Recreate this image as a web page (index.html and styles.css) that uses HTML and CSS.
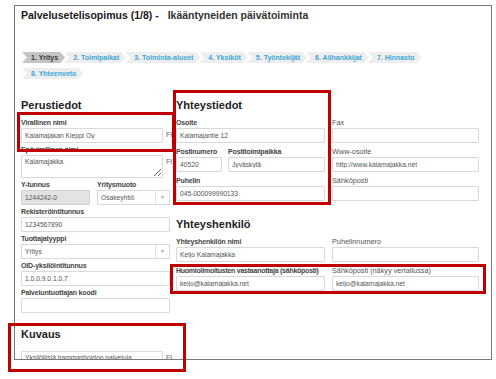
FILE: index.html
```html
<!DOCTYPE html>
<html lang="fi">
<head>
<meta charset="UTF-8" />
<title>Palvelusetelisopimus</title>
<link rel="stylesheet" href="styles.css">
</head>
<body>

<div class="frame">
  <h1 class="page-title">Palvelusetelisopimus (1/8) - <span class="sub">Ikääntyneiden päivätoiminta</span></h1>

  <ul class="steps">
    <li class="current">1. Yritys</li>
    <li>2. Toimipaikat</li>
    <li>3. Toiminta-alueet</li>
    <li>4. Yksiköt</li>
    <li>5. Työntekijät</li>
    <li>6. Alihankkijat</li>
    <li>7. Hinnasto</li>
    <li>8. Yhteenveto</li>
  </ul>

  <div class="cols">
    <!-- Perustiedot -->
    <section class="col-left">
      <h2>Perustiedot</h2>
      <div class="field">
        <label>Virallinen nimi</label>
        <div class="lang-row"><input class="w-lang" type="text" value="Kalamajakan Kieppi Oy"><span class="fi">FI</span></div>
      </div>
      <div class="field">
        <label>Epävirallinen nimi</label>
        <div class="lang-row"><textarea class="w-lang area">Kalamajakka</textarea><span class="fi">FI</span></div>
      </div>
      <div class="field pair">
        <div class="ytunnus">
          <label>Y-tunnus</label>
          <input class="readonly" type="text" value="1244242-0" readonly>
        </div>
        <div class="muoto">
          <label>Yritysmuoto</label>
          <div class="select"><span>Osakeyhtiö</span></div>
        </div>
      </div>
      <div class="field">
        <label>Rekisteröintitunnus</label>
        <input type="text" value="1234567890">
      </div>
      <div class="field">
        <label>Tuottajatyyppi</label>
        <div class="select"><span>Yritys</span></div>
      </div>
      <div class="field">
        <label>OID-yksilöintitunnus</label>
        <input type="text" value="1.0.0.9.0.1.0.7">
      </div>
      <div class="field">
        <label>Palveluntuottajan koodi</label>
        <input type="text" value="">
      </div>

      <h2 class="kuvaus">Kuvaus</h2>
      <div class="lang-row"><textarea class="w-lang area-big">Yksilöllisiä hammashoidon palveluja</textarea><span class="fi">FI</span></div>
    </section>

    <!-- Yhteystiedot -->
    <section class="col-contact">
      <h2>Yhteystiedot</h2>
      <div class="grid2">
        <div>
          <label>Osoite</label>
          <input type="text" value="Kalamajantie 12">
        </div>
        <div>
          <label class="light">Fax</label>
          <input type="text" value="">
        </div>
        <div class="post">
          <div class="postnum">
            <label>Postinumero</label>
            <input type="text" value="40520">
          </div>
          <div class="postplace">
            <label>Postitoimipaikka</label>
            <input type="text" value="Jyväskylä">
          </div>
        </div>
        <div>
          <label class="light">Www-osoite</label>
          <input type="text" value="http://www.kalamajakka.net">
        </div>
        <div>
          <label>Puhelin</label>
          <input type="text" value="045-000099990133">
        </div>
        <div>
          <label class="light">Sähköposti</label>
          <input type="text" value="">
        </div>
      </div>

      <h2 class="contact-head">Yhteyshenkilö</h2>
      <div class="grid2">
        <div>
          <label>Yhteyshenkilön nimi</label>
          <input type="text" value="Keijo Kalamajakka">
        </div>
        <div>
          <label class="light">Puhelinnumero</label>
          <input type="text" value="">
        </div>
        <div>
          <label class="long">Huomioilmoitusten vastaanottaja (sähköposti)</label>
          <input type="text" value="keijo@kalamajakka.net">
        </div>
        <div>
          <label class="light">Sähköposti (näkyy vertailussa)</label>
          <input type="text" value="keijo@kalamajakka.net">
        </div>
      </div>
    </section>
  </div>
</div>

<!-- korostukset -->
<div class="mark mark-nimi"></div>
<div class="mark mark-yhteys"></div>
<div class="mark mark-email"></div>
<div class="mark mark-kuvaus"></div>

</body>
</html>
```

FILE: styles.css
```css
body {
  margin: 0;
  font-family: "Liberation Sans", Arial, sans-serif;
  background: #fff;
  color: #333;
}
.frame {
  margin: 5px 0 0 14px;
  width: 478px;
  height: 355px;
  box-sizing: border-box;
  border: 1px solid #7a7a7a;
  padding: 2px 0 0 6px;
  overflow: hidden;
}
.page-title {
  margin: 0;
  font-size: 10.5px;
  line-height: 14px;
  font-weight: bold;
  color: #1a1a1a;
}
.page-title .sub {
  margin-left: 6px;
  color: #333;
}
/* Vaiheet */
.steps {
  list-style: none;
  margin: 30px 0 0 1px;
  padding: 0;
  display: flex;
  flex-wrap: wrap;
  row-gap: 5px;
  max-width: 420px;
}
.steps li {
  height: 11px;
  line-height: 11px;
  font-size: 7px;
  font-weight: bold;
  color: #3fa7d6;
  background: #eeeeee;
  padding: 0 7px 0 9px;
  margin-right: -1px;
  clip-path: polygon(0 0, calc(100% - 5px) 0, 100% 50%, calc(100% - 5px) 100%, 0 100%, 5px 50%);
}
.steps li.current {
  background: #c4c4c4;
  color: #3a3a3a;
}
/* Sarakkeet */
.cols {
  display: flex;
  gap: 6px;
  margin-top: 19px;
}
.col-left {
  width: 149px;
  flex: none;
}
.col-contact {
  width: 303px;
  flex: none;
}
h2 {
  margin: 0 0 6px;
  font-size: 11px;
  line-height: 14px;
  font-weight: bold;
  color: #222;
}
h2.kuvaus {
  margin: 14px 0 10px;
}
h2.contact-head {
  margin-top: 16px;
}
label {
  display: block;
  font-size: 7px;
  line-height: 9px;
  font-weight: bold;
  letter-spacing: -0.15px;
  color: #444;
  margin-bottom: 1px;
  white-space: nowrap;
}
label.light {
  font-weight: normal;
  font-size: 7.3px;
  letter-spacing: 0;
  color: #555;
}
label.long {
  letter-spacing: -0.25px;
}
input, textarea {
  display: block;
  width: 100%;
  height: 15px;
  box-sizing: border-box;
  border: 1px solid #d9d9d9;
  border-radius: 1px;
  padding: 0 3px;
  margin: 0;
  font-family: "Liberation Sans", Arial, sans-serif;
  font-size: 6.7px;
  color: #555;
  background: #fff;
  outline: none;
}
textarea {
  padding: 2px 3px;
  resize: vertical;
  line-height: 8px;
}
textarea.area {
  height: 23px;
}
textarea.area-big {
  height: 30px;
}
input.readonly {
  background: #e3e3e3;
  border-color: #d0d0d0;
}
.field {
  margin-bottom: 2px;
}
.lang-row {
  display: flex;
  align-items: flex-start;
  gap: 3px;
}
.lang-row .w-lang {
  width: 142px;
  flex: none;
}
.fi {
  font-size: 7px;
  line-height: 12px;
  padding-top: 1px;
  color: #666;
}
.pair {
  display: flex;
  gap: 7px;
}
.ytunnus {
  width: 69px;
}
.muoto {
  width: 73px;
}
.select {
  position: relative;
  height: 15px;
  box-sizing: border-box;
  border: 1px solid #d9d9d9;
  padding: 0 3px;
  font-size: 6.7px;
  line-height: 13px;
  color: #555;
  background: #fff;
}
.select::after {
  content: "▾";
  position: absolute;
  top: 0;
  right: 0;
  width: 13px;
  height: 13px;
  border-left: 1px solid #e2e2e2;
  text-align: center;
  font-size: 6px;
  color: #aaa;
}
.grid2 {
  display: grid;
  grid-template-columns: 149px 147px;
  column-gap: 7px;
  row-gap: 4px;
}
.post {
  display: flex;
  gap: 6px;
}
.postnum {
  width: 46px;
}
.postplace {
  flex: 1;
}
/* Punaiset korostukset */
.mark {
  position: absolute;
  box-sizing: border-box;
  border: 3px solid #c00000;
}
.mark-nimi {
  left: 17px;
  top: 112px;
  width: 158px;
  height: 40px;
}
.mark-yhteys {
  left: 173px;
  top: 90px;
  width: 158px;
  height: 115px;
}
.mark-email {
  left: 170px;
  top: 264px;
  width: 316px;
  height: 30px;
}
.mark-kuvaus {
  left: 8px;
  top: 323px;
  width: 178px;
  height: 49px;
}
```
